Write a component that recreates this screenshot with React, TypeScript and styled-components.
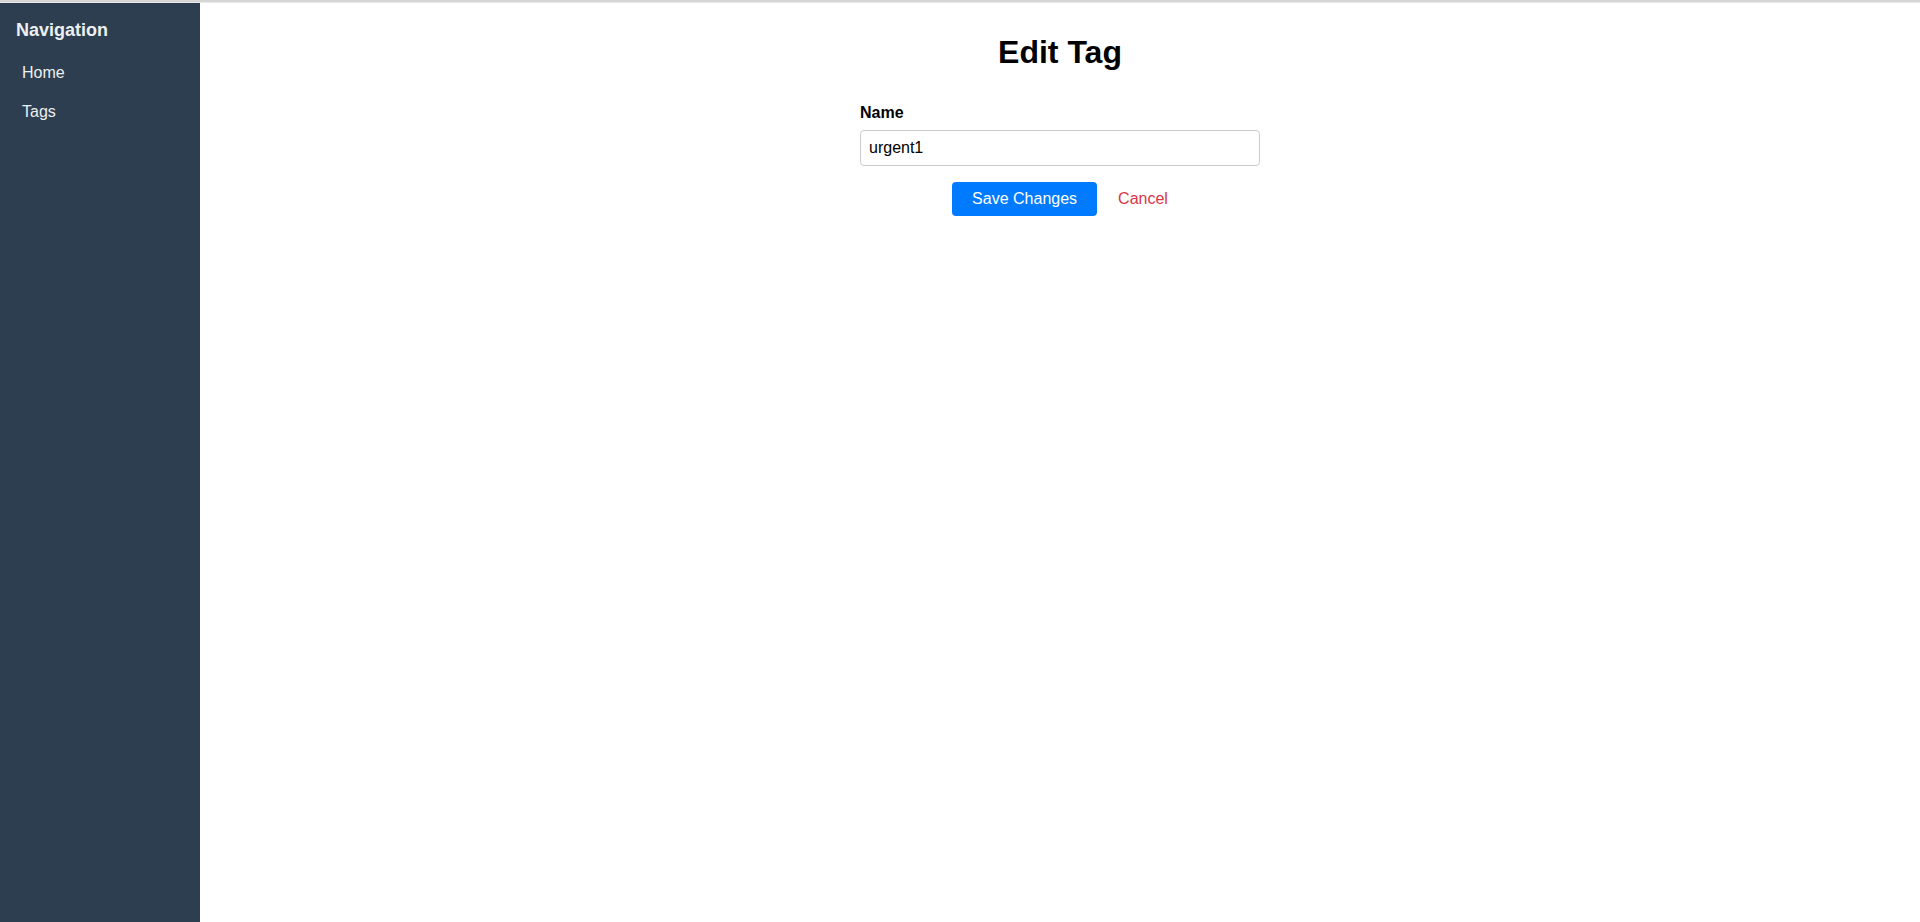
import React, { useState } from 'react';
import styled, { createGlobalStyle } from 'styled-components';

const GlobalStyle = createGlobalStyle`
  html, body {
    margin: 0;
    padding: 0;
    height: 100%;
    font-family: 'Liberation Sans', Arial, sans-serif;
    background: #ffffff;
  }
  #root {
    height: 100%;
  }
  * {
    box-sizing: border-box;
  }
`;

const links = ['Home', 'Tags'];

const App = () => {
  const [name, setName] = useState('urgent1');

  return (
    <>
      <GlobalStyle />
      <Page>
        <TopLine />
        <Layout>
          <Sidebar>
            <NavTitle>Navigation</NavTitle>
            <NavList>
              {links.map(link => (
                <NavItem key={link}>
                  <NavLink href='#'>{link}</NavLink>
                </NavItem>
              ))}
            </NavList>
          </Sidebar>

          <Main>
            <Title>Edit Tag</Title>
            <Form onSubmit={e => e.preventDefault()}>
              <Label htmlFor='tag-name'>Name</Label>
              <Input id='tag-name' value={name} onChange={e => setName(e.target.value)} />
              <Actions>
                <SaveButton type='submit'>Save Changes</SaveButton>
                <CancelLink href='#'>Cancel</CancelLink>
              </Actions>
            </Form>
          </Main>
        </Layout>
      </Page>
    </>
  );
};

export default App;

const Page = styled.div`
  display: flex;
  flex-direction: column;
  height: 100%;
`;

const TopLine = styled.div`
  height: 3px;
  flex-shrink: 0;
  background: #d6d6d6;
  border-bottom: 1px solid #e8e8e8;
`;

const Layout = styled.div`
  display: flex;
  flex: 1;
  min-height: 0;
`;

const Sidebar = styled.nav`
  width: 200px;
  flex-shrink: 0;
  background: #2c3e50;
  padding: 17px 15px 15px 16px;
`;

const NavTitle = styled.h2`
  margin: 0 0 13px;
  font-size: 18px;
  font-weight: bold;
  color: #ecf0f1;
  line-height: 21px;
`;

const NavList = styled.ul`
  list-style: none;
  margin: 0;
  padding: 0;
`;

const NavItem = styled.li`
  margin: 0;
`;

const NavLink = styled.a`
  display: block;
  padding: 10px 6px 11px;
  font-size: 16px;
  line-height: 18px;
  color: #ecf0f1;
  text-decoration: none;
`;

const Main = styled.main`
  flex: 1;
  padding: 31px 20px;
  display: flex;
  flex-direction: column;
  align-items: center;
`;

const Title = styled.h1`
  margin: 0 0 33px;
  font-size: 32px;
  line-height: 37px;
  font-weight: bold;
  color: #000;
`;

const Form = styled.form`
  width: 400px;
  display: flex;
  flex-direction: column;
`;

const Label = styled.label`
  display: block;
  margin-bottom: 8px;
  font-size: 16px;
  line-height: 18px;
  font-weight: bold;
  color: #000;
`;

const Input = styled.input`
  width: 100%;
  height: 36px;
  padding: 8px;
  font-family: 'Liberation Sans', Arial, sans-serif;
  font-size: 16px;
  color: #000;
  border: 1px solid #ccc;
  border-radius: 4px;
  outline: none;
`;

const Actions = styled.div`
  display: flex;
  justify-content: center;
  align-items: center;
  gap: 21px;
  margin-top: 16px;
`;

const SaveButton = styled.button`
  height: 34px;
  padding: 0 20px;
  border: none;
  border-radius: 4px;
  background: #007bff;
  color: #fff;
  font-family: 'Liberation Sans', Arial, sans-serif;
  font-size: 16px;
  cursor: pointer;
`;

const CancelLink = styled.a`
  font-size: 16px;
  color: #dc3545;
  text-decoration: none;
`;
